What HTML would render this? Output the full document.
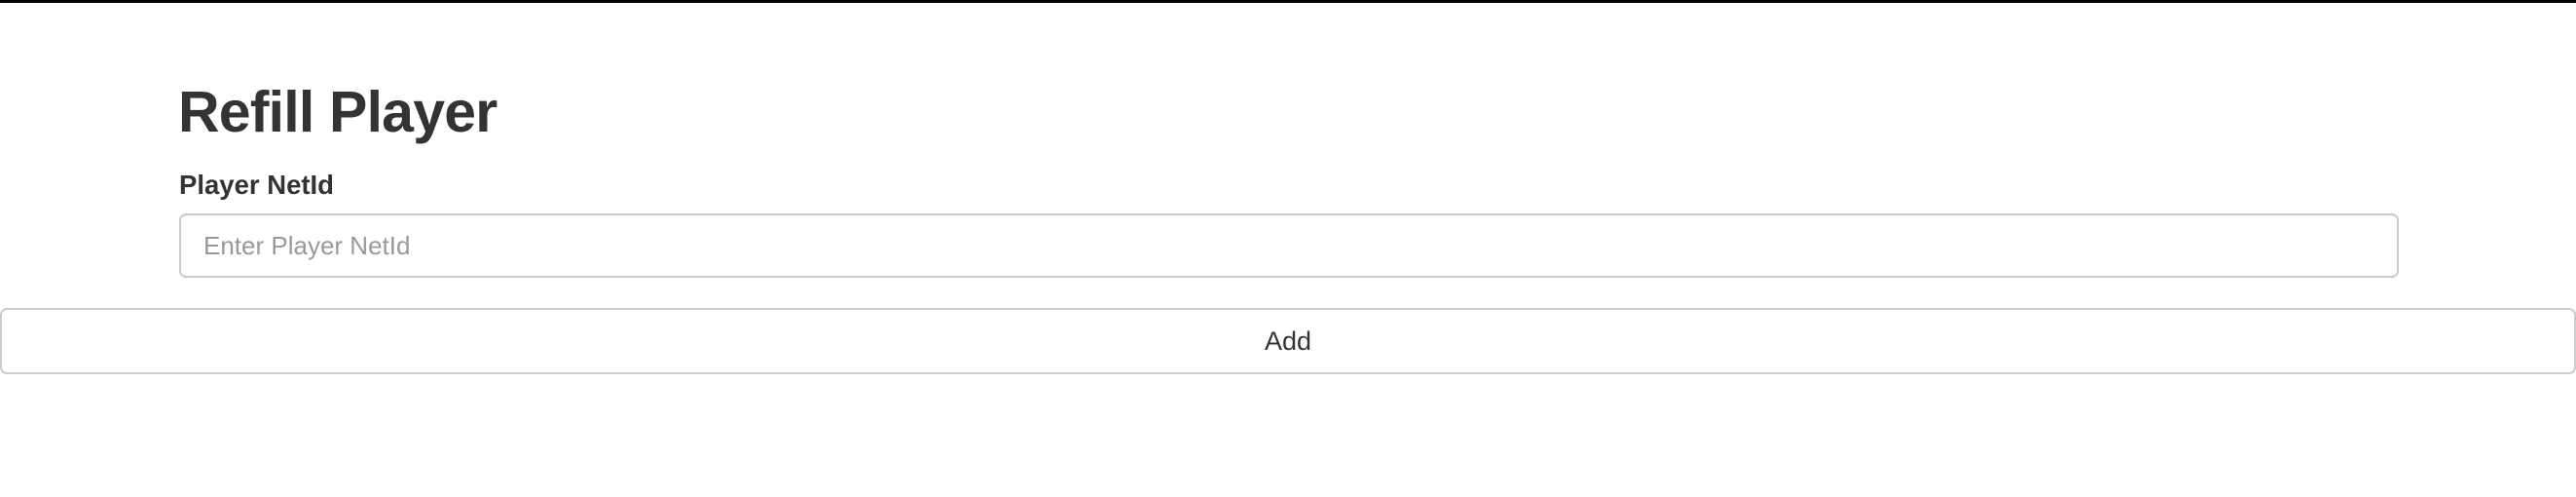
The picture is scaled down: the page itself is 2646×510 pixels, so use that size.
<!DOCTYPE html>
<html><head><meta charset="utf-8"><style>
html,body{margin:0;padding:0;background:#fff;width:2646px;height:510px;overflow:hidden;font-family:"Liberation Sans",Arial,sans-serif;color:#333}
.top{position:absolute;left:0;top:0;width:2646px;height:3px;background:#000}
h1{position:absolute;left:183px;top:75px;margin:0;font-size:59px;font-weight:bold;line-height:80px;letter-spacing:-0.8px}
.lbl{position:absolute;left:184px;top:173px;font-size:27.5px;font-weight:bold;line-height:34px}
.inp{position:absolute;left:184px;top:219px;width:2276px;height:62px;border:2px solid #ccc;border-radius:7px;box-shadow:inset 0 1px 2px rgba(0,0,0,.06)}
.inp span{position:absolute;left:23px;top:0;line-height:62px;font-size:26px;color:#999}
.btn{position:absolute;left:0;top:316px;width:2642px;height:64px;border:2px solid #ccc;border-radius:7px;text-align:center;line-height:64px;font-size:27px;color:#333}
</style></head><body>
<div class="top"></div>
<h1>Refill Player</h1>
<div class="lbl">Player NetId</div>
<div class="inp"><span>Enter Player NetId</span></div>
<div class="btn">Add</div>
</body></html>
